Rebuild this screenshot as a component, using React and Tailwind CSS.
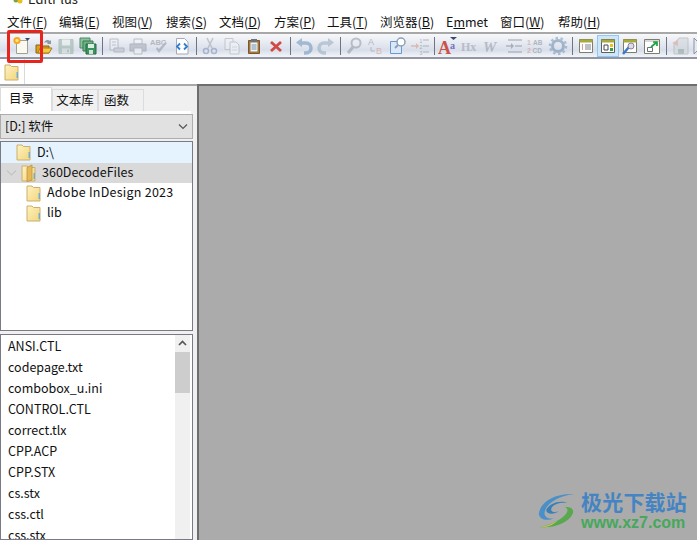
import React from "react";

const cjk = { fontFamily: '"Noto Sans CJK SC","Noto Sans",sans-serif' };

const Folder = ({ open }) => (
  <svg width="15" height="18" viewBox="0 0 15 18" className="shrink-0">
    <defs>
      <linearGradient id="fg" x1="0" y1="0" x2="1" y2="1">
        <stop offset="0" stopColor="#fdf2c0" />
        <stop offset="1" stopColor="#f3d67e" />
      </linearGradient>
    </defs>
    <path d="M1 2h5l1.500 1.500H14V17H1z" fill="url(#fg)" stroke="#cdae6c" strokeWidth="1" />
    <path d="M12.500 9H14v6h-1.500z" fill="#5fa8d8" opacity=".85" />
    {open && <path d="M6 3.500L11 1v15l-5 1.500z" fill="#e6b955" stroke="#b58d3e" strokeWidth=".7" />}
  </svg>
);

const S = ({ children, dim }) => <svg width="20" height="20" viewBox="0 0 20 20" className={dim ? "opacity-50" : ""}>{children}</svg>;

const icons = {
  new: <S><path d="M4.500 4.500h11v13h-11z" fill="#fbfaf0" stroke="#a0a094" /><circle cx="5" cy="4.500" r="3.600" fill="#f5a623" /><circle cx="5" cy="4.500" r="1.700" fill="#ffe27a" /><path d="M13 2h5l-2.500 3z" fill="#3b4a6b" /></S>,
  open: <S><path d="M2 9h6l1 1h6v7H2z" fill="#d9a020" stroke="#8a6510" /><path d="M4 17l2-5h12l-3 5z" fill="#f6c944" stroke="#a87c14" /><path d="M10 7c1-3 4-4 6-2l1-1v4h-4l1-1c-1-1-3-1-4 0z" fill="#8c98a3" /></S>,
  save: <S dim><path d="M3 3.500h14v14H3z" fill="#8fae9f" stroke="#84a092" /><path d="M6 3.500h8v6H6z" fill="#e8efeb" /><path d="M6 12.500h8v5H6z" fill="#d0d8d4" /><path d="M11 13.500h2v3h-2z" fill="#8ca399" /></S>,
  saveall: <S><path d="M2 2h10v10H2z" fill="#8ac2a0" stroke="#4c8a62" /><path d="M5 5h10v10H5z" fill="#6fb088" stroke="#3a7650" /><path d="M8 8h10v10H8z" fill="#3b9460" stroke="#256a42" /><path d="M10 8h6v4h-6z" fill="#d8eee0" /><path d="M11 14h4v4h-4z" fill="#cfe3d6" /></S>,
  preview: <S dim><path d="M4 3h8v11H4z" fill="#eef0f4" stroke="#8d919c" /><path d="M6 6h4M6 9h4" stroke="#9a9ea8" /><path d="M8 12h10v4H8z" fill="#b8bcc5" stroke="#8a8f9a" /></S>,
  print: <S dim><path d="M6 3h8v5H6z" fill="#f3f4f6" stroke="#8d919c" /><path d="M2 8h16v7H2z" fill="#a0a4ae" stroke="#81868f" /><path d="M6 12h8v6H6z" fill="#f3f4f6" stroke="#8d919c" /></S>,
  spell: <S dim><path d="M6 13l3 4 8-10-2-1-6 7-2-2z" fill="#8a91a0" /><text x="0" y="8.500" fontSize="7.500" fontFamily="Liberation Sans" fontWeight="700" fill="#838791">ABC</text></S>,
  code: <S><path d="M4.500 2.500h8l3.500 3.500v12H4.500z" fill="#fff" stroke="#a6abb5" /><path d="M8 7.500l-3 3 3 3" fill="none" stroke="#2f7ecf" strokeWidth="1.800" /><path d="M12 7.500l3 3-3 3" fill="none" stroke="#2f7ecf" strokeWidth="1.800" /></S>,
  cut: <S dim><path d="M13 2L8 12M7 2l5 10" stroke="#9a9ea8" strokeWidth="1.600" /><circle cx="6" cy="15" r="2.500" fill="none" stroke="#7386ad" strokeWidth="1.500" /><circle cx="14" cy="15" r="2.500" fill="none" stroke="#7386ad" strokeWidth="1.500" /></S>,
  copy: <S dim><path d="M3 2.500h8v11H3z" fill="#eef0f3" stroke="#a0a4ad" /><path d="M8 6h6l3 3v9H8z" fill="#f5f6f8" stroke="#a0a4ad" /><path d="M10 11h5M10 14h5" stroke="#c4c7ce" /></S>,
  paste: <S><path d="M4.500 4.500h11v13h-11z" fill="#a5763c" stroke="#7a582c" /><path d="M6.500 6.500h7v9h-7z" fill="#eef5fa" /><path d="M7.500 9h5M7.500 11h5M7.500 13h5" stroke="#6d93b5" /><path d="M7 3h6v3H7z" fill="#6b7580" /></S>,
  del: <S><path d="M5 6l10 9M15 6L5 15" stroke="#cf4a44" strokeWidth="2.800" /></S>,
  undo: <S dim><path d="M7 7h5a4.500 4.500 0 0 1 0 10h-2" fill="none" stroke="#5f8cb3" strokeWidth="3.500" /><path d="M8 2v9L2 6.500z" fill="#5f8cb3" /></S>,
  redo: <S dim><path d="M13 7H8a4.500 4.500 0 0 0 0 10h2" fill="none" stroke="#8ca6b8" strokeWidth="3.500" /><path d="M12 2v9l6-4.500z" fill="#8ca6b8" /></S>,
  find: <S dim><circle cx="12" cy="7" r="4.500" fill="#e8eef4" stroke="#8a909c" strokeWidth="2" /><path d="M9 11l-5 6" stroke="#8a909c" strokeWidth="3" /></S>,
  replace: <S dim><text x="2" y="9" fontSize="9" fontFamily="Liberation Sans" fill="#7d838e">A</text><path d="M5 11v4h4" fill="none" stroke="#8d939e" /><text x="10" y="18" fontSize="9" fontFamily="Liberation Sans" fill="#d08a7e">B</text></S>,
  findfiles: <S><path d="M2.500 5.500h11v12h-11z" fill="#dbe8f7" stroke="#6a9ad0" /><circle cx="13" cy="6" r="4" fill="#fff" stroke="#8ba0b8" strokeWidth="1.500" /><path d="M10 9l-3 3" stroke="#8ba0b8" strokeWidth="2" /></S>,
  goto: <S dim><path d="M1 10h6" stroke="#d88e76" strokeWidth="1.500" /><path d="M6 7l3 3-3 3z" fill="#d88e76" /><path d="M13 4h6M13 10h6M13 16h6" stroke="#7d828c" /><text x="9.500" y="6.500" fontSize="5" fontFamily="Liberation Sans" fill="#6a707a">1</text><text x="9.500" y="12.500" fontSize="5" fontFamily="Liberation Sans" fill="#6a707a">2</text><text x="9.500" y="18.500" fontSize="5" fontFamily="Liberation Sans" fill="#6a707a">3</text></S>,
  font: <S><text x="0" y="18" fontSize="18" fontFamily="Liberation Serif" fontWeight="700" fill="#c9554a">A</text><text x="12" y="13" fontSize="10" fontFamily="Liberation Serif" fontWeight="700" fill="#7272c0">a</text><path d="M12 1h7l-3.500 3z" fill="#3b4a6b" /></S>,
  hx: <S dim><text x="1" y="15" fontSize="12" fontFamily="Liberation Serif" fontWeight="700" fill="#8f96a2">Hx</text></S>,
  w: <S dim><text x="1" y="15.500" fontSize="15" fontFamily="Liberation Serif" fontWeight="700" fontStyle="italic" fill="#8b8f99">W</text></S>,
  indent: <S dim><path d="M2 10h6" stroke="#7a869a" strokeWidth="1.500" /><path d="M7 7l3 3-3 3z" fill="#6c7b92" /><path d="M4 4h14M11 10h7M4 16h14" stroke="#868a94" strokeWidth="1.300" /></S>,
  sort: <S dim><text x="1" y="8.500" fontSize="7" fontFamily="Liberation Sans" fontWeight="700" fill="#cf8d7c">1</text><text x="1" y="16.500" fontSize="7" fontFamily="Liberation Sans" fontWeight="700" fill="#cf8d7c">2</text><text x="7" y="8.500" fontSize="6.500" fontFamily="Liberation Sans" fontWeight="700" fill="#7d828c">AB</text><text x="6.500" y="16.500" fontSize="6.500" fontFamily="Liberation Sans" fontWeight="700" fill="#7d828c">CD</text></S>,
  gear: <S dim><circle cx="10" cy="10" r="5.500" fill="none" stroke="#5f83a8" strokeWidth="3" /><circle cx="10" cy="10" r="8" fill="none" stroke="#6f90b0" strokeWidth="2.500" strokeDasharray="2.500 2.500" /></S>,
  list: <S><path d="M3.500 3.500h13v13h-13z" fill="#fff" stroke="#7c7f6a" /><path d="M3.500 3.500h13v3h-13z" fill="#a8aa3c" /><path d="M6 9h1M6 11h1M6 13h1" stroke="#c9302c" /><path d="M9 9h6M9 11h6M9 13h6" stroke="#7b8290" /></S>,
  panel: <S><path d="M3.500 3.500h13v13h-13z" fill="#fff" stroke="#5f6250" /><path d="M3.500 3.500h13v3h-13z" fill="#a8aa3c" /><path d="M6 9h4v5H6z" fill="none" stroke="#445" /><path d="M12 8h3v3h-3z" fill="#e8c020" /><path d="M12 12h3v3h-3z" fill="#30a050" /></S>,
  clip: <S><path d="M3.500 3.500h13v13h-13z" fill="#fff" stroke="#7c7f6a" /><path d="M3.500 3.500h13v3h-13z" fill="#a8aa3c" /><path d="M3 18l6-7" stroke="#3a7ac8" strokeWidth="2.500" /><circle cx="11" cy="10" r="3" fill="#d8dee8" stroke="#8d7f9a" /></S>,
  web: <S><path d="M2.500 3.500h15v14h-15z" fill="#fff" stroke="#7c7f6a" /><path d="M3 4h14v2H3z" fill="#d7d9dc" /><path d="M5.500 11.500h5v4h-5z" fill="none" stroke="#68707c" /><path d="M9 11l6-5M11 6h4v4" fill="none" stroke="#1ea33e" strokeWidth="1.700" /></S>,
  floppy: <S dim><path d="M9 2h9v16H4V8z" fill="#ccd4d4" stroke="#98a2a2" /><path d="M8 4L2 7l6 3z" fill="#d69282" /><path d="M8 13h6v5H8z" fill="#80988e" /></S>,
  next: <S><path d="M2 2v16l8-8z" fill="#e7eaf0" stroke="#8c94a4" /></S>,
};

const groups = [
  ["new", "open", "save", "saveall"],
  ["preview", "print", "spell", "code"],
  ["cut", "copy", "paste", "del"],
  ["undo", "redo"],
  ["find", "replace", "findfiles", "goto"],
  ["font", "hx", "w", "indent", "sort", "gear"],
  ["list", "panel", "clip", "web"],
  ["floppy", "next"],
];

const MenuItem = ({ label, k, className }) => (
  <span className={`whitespace-nowrap ${className}`}>
    {label}(<span className="underline">{k}</span>)
  </span>
);

const menus = [
  ["文件", "F", "w-[52px]"],
  ["编辑", "E", "w-[53px]"],
  ["视图", "V", "w-[54px]"],
  ["搜索", "S", "w-[53px]"],
  ["文档", "D", "w-[55px]"],
  ["方案", "P", "w-[53px]"],
  ["工具", "T", "w-[53px]"],
  ["浏览器", "B", "w-[66px]"],
];

const TreeRow = ({ children, className }) => (
  <div className={`flex items-center pb-[1px] text-[12.500px] text-[#111] ${className}`}>{children}</div>
);

const files = ["ANSI.CTL", "codepage.txt", "combobox_u.ini", "CONTROL.CTL", "correct.tlx", "CPP.ACP", "CPP.STX", "cs.stx", "css.ctl", "css.stx"];

export default function App() {
  return (
    <div className="relative flex h-[540px] w-[697px] flex-col overflow-hidden bg-white" style={cjk}>
      <div className="flex h-[10px] items-end gap-[5px] overflow-hidden pl-[13px]">
        <svg width="10" height="8" viewBox="0 0 10 8" className="mb-[4px] shrink-0">
          <circle cx="3" cy="2" r="2.500" fill="#7ba33c" />
          <circle cx="7" cy="3" r="2.500" fill="#e8c020" />
        </svg>
        <span className="mb-[3px] text-[13px] leading-[16px] text-[#222]">EditPlus</span>
      </div>
      <div className="flex h-[22px] items-center pl-[7px] pt-[2px] text-[12.500px] text-[#111]">
        {menus.map(([l, k, w]) => <MenuItem key={k} label={l} k={k} className={w} />)}
        <span className="w-[54px]">E<span className="underline">m</span>met</span>
        <MenuItem label="窗口" k="W" className="w-[58px]" />
        <MenuItem label="帮助" k="H" />
      </div>
      <div className="flex h-[27px] items-center overflow-hidden border-t-2 border-b-2 border-t-[#a8a8a8] border-b-[#9296a5] bg-gradient-to-b from-[#f7f8fa] via-[#d8deea] via-70% to-[#f3f5f8] pl-[11px]">
        {groups.map((g, i) => (
          <React.Fragment key={i}>
            {g.map((n) => (
              <div key={n} className={`flex h-[22px] w-[22px] shrink-0 items-center justify-center ${n === "panel" ? "border border-[#90c8f5] bg-[#cde6fb]" : ""}`}>
                {icons[n]}
              </div>
            ))}
            {i < groups.length - 1 && <div className="mx-[2.500px] h-[18px] w-px shrink-0 bg-[#6f7480]" />}
          </React.Fragment>
        ))}
      </div>
      <div className="flex h-[25px] items-start pl-[4px] pt-[4px]">
        <Folder />
        <div className="-mt-[4px] ml-[5px] h-[25px] w-px bg-[#d9d9d9]" />
      </div>
      <div className="flex min-h-0 flex-1">
        <div className="flex w-[197px] shrink-0 flex-col border-t-2 border-[#a8a8a8] bg-[#f0f0f0] pr-[4px]">
          <div className="flex h-[25px] shrink-0 items-end text-[12.500px] text-[#111]">
            <div className="flex h-[24px] w-[52px] items-center border border-b-0 border-[#dcdcdc] bg-white pb-[3px] pl-[8px]">目录</div>
            <div className="flex h-[22px] w-[46px] items-center justify-center border border-b-0 border-[#dcdcdc]">文本库</div>
            <div className="flex h-[22px] w-[46px] items-center border border-b-0 border-[#dcdcdc] pl-[5px]">函数</div>
          </div>
          <div className="h-[3px] w-[191px] shrink-0 bg-white" />
          <div className="flex h-[25px] shrink-0 items-center justify-between border border-[#adadad] bg-[#e1e1e1] pl-[4px] pr-[3px] text-[12.500px] text-[#111]">
            <span>[D:] 软件</span>
            <svg width="12" height="8" viewBox="0 0 12 8"><path d="M2 1.500l4 4 4-4" fill="none" stroke="#555" strokeWidth="1.200" /></svg>
          </div>
          <div className="mt-[2px] h-[190px] shrink-0 border border-[#7a7a86] bg-white">
            <TreeRow className="h-[21px] gap-[6px] bg-[#e5f3ff] pl-[15px]"><Folder />D:\</TreeRow>
            <TreeRow className="h-[20px] bg-[#d9d9d9] pl-[5px]">
              <svg width="11" height="8" viewBox="0 0 11 8" className="shrink-0"><path d="M1 1.500l4.500 4.500 4.500-4.500" fill="none" stroke="#c4c4c4" strokeWidth="1.200" /></svg>
              <span className="ml-[4px] flex items-center gap-[6px]"><Folder open />360DecodeFiles</span>
            </TreeRow>
            <TreeRow className="h-[20px] gap-[6px] pl-[25px]"><Folder /><span className="tracking-[0.25px]">Adobe InDesign 2023</span></TreeRow>
            <TreeRow className="h-[20px] gap-[6px] pl-[25px]"><Folder />lib</TreeRow>
          </div>
          <div className="mt-[3px] flex min-h-0 flex-1 overflow-hidden border border-[#7a7a86] bg-white">
            <div className="flex-1 pl-[7px] pt-[1px] text-[12.500px] text-[#111]">
              {files.map((f) => <div key={f} className="flex h-[21px] items-center">{f}</div>)}
            </div>
            <div className="mr-[2px] flex w-[15px] shrink-0 flex-col items-center bg-[#f0f0f0]">
              <svg width="15" height="17" viewBox="0 0 15 17" className="shrink-0"><path d="M4 10l3.500-3.500L11 10" fill="none" stroke="#555" strokeWidth="1.700" /></svg>
              <div className="h-[41px] w-[15px] bg-[#cdcdcd]" />
            </div>
          </div>
        </div>
        <div className="min-w-0 flex-1 border-l-2 border-t-2 border-[#6e6e6e] bg-[#ababab]" />
      </div>

      <div className="absolute left-[7px] top-[30px] h-[33px] w-[36px] rounded-[2px] border-[3px] border-[#e8251d]" />

      <div className="absolute left-[538px] top-[489px] flex items-center">
        <svg width="43" height="41" viewBox="0 0 52 46" className="shrink-0">
          <path d="M1 27C3 12 20 2 44 3 26 5 10 14 8 25c-1 6 5 9 12 7-8 4-18 3-19-5z" fill="#4a90c8" />
          <path d="M10 22C14 14 27 10 36 14c-8-1-18 1-20 7-1 4 5 5 9 3-5 4-16 4-15-2z" fill="#3a7fb8" />
          <path d="M2 43c14 2 35-4 40-16 2-5-2-9-9-8 4 2 3 6 0 9-6 7-18 12-31 15z" fill="#58a84e" />
          <path d="M2 43c8-1 16-4 22-8-5 5-13 9-22 8z" fill="#d5c84a" />
        </svg>
        <div className="flex flex-col">
          <span className="text-[21px] font-bold leading-[25px] tracking-[0.2px] text-[#4484c2]">极光下载站</span>
          <span className="text-[16px] font-bold leading-[18px] text-[#45a85a]" style={{ fontFamily: '"Liberation Sans",sans-serif' }}>www.xz7.com</span>
        </div>
      </div>
    </div>
  );
}
